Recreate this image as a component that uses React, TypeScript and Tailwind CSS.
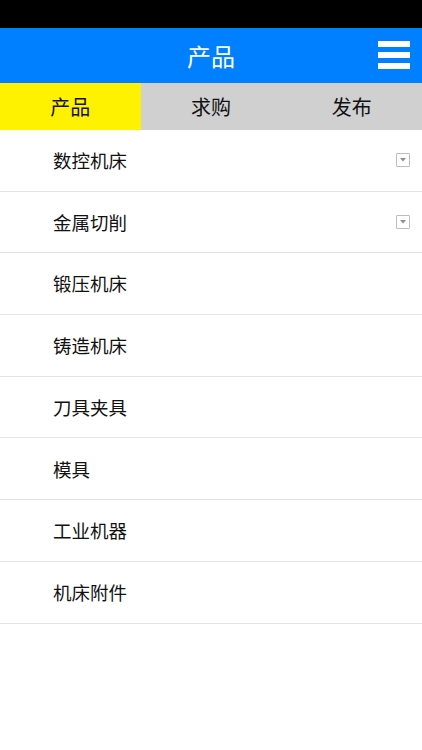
import { useState } from "react";

const ITEMS = [
  { name: "数控机床", more: true },
  { name: "金属切削", more: true },
  { name: "锻压机床", more: false },
  { name: "铸造机床", more: false },
  { name: "刀具夹具", more: false },
  { name: "模具", more: false },
  { name: "工业机器", more: false },
  { name: "机床附件", more: false },
];

const TABS = ["产品", "求购", "发布"];

function ExpandBox() {
  return (
    <div className="flex h-[14px] w-[14px] items-center justify-center rounded-[1px] border border-[#bdbdbd] bg-white">
      <svg width="6" height="4" viewBox="0 0 6 4">
        <path d="M0 0H6L3 3.5Z" fill="#8f8f8f" />
      </svg>
    </div>
  );
}

export default function App() {
  const [tab, setTab] = useState(0);

  return (
    <div
      className="flex h-[750px] w-[422px] flex-col bg-white"
      style={{ fontFamily: '"Noto Sans CJK SC", "Noto Sans", sans-serif' }}
    >
      {/* Status bar */}
      <div className="h-[28px] bg-black" />

      {/* Header */}
      <header className="relative flex h-[55px] items-center justify-center bg-[#0080ff]">
        <h1 className="text-[24px] font-normal leading-none text-white">产品</h1>
        <button className="absolute right-[12px] top-[13px] flex w-[32px] flex-col gap-[5px]" aria-label="menu">
          <span className="h-[6px] w-full bg-white" />
          <span className="h-[6px] w-full bg-white" />
          <span className="h-[6px] w-full bg-white" />
        </button>
      </header>

      {/* Tabs */}
      <nav className="flex h-[47px] bg-[#d0d0d0]">
        {TABS.map((t, i) => (
          <button
            key={t}
            onClick={() => setTab(i)}
            className={
              "flex flex-1 items-center justify-center text-[20px] leading-none text-[#111] " +
              (tab === i ? "bg-[#fff200]" : "bg-[#d0d0d0]")
            }
          >
            {t}
          </button>
        ))}
      </nav>

      {/* List */}
      <ul className="flex flex-col">
        {ITEMS.map((item) => (
          <li
            key={item.name}
            className="flex h-[61.7px] items-center justify-between border-b border-[#e4e4e4] pl-[53px] pr-[12px]"
          >
            <span className="text-[18.5px] leading-none text-[#111]">{item.name}</span>
            {item.more && <ExpandBox />}
          </li>
        ))}
      </ul>
    </div>
  );
}
